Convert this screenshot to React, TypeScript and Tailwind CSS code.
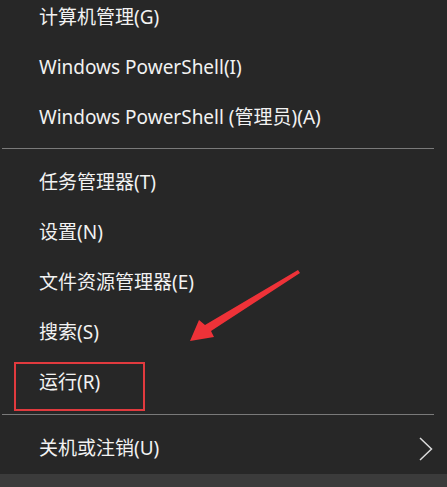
type Item = { label: string; boxed?: boolean; submenu?: boolean };

const groups: Item[][] = [
  [
    { label: "计算机管理(G)" },
    { label: "Windows PowerShell(I)" },
    { label: "Windows PowerShell (管理员)(A)" },
  ],
  [
    { label: "任务管理器(T)" },
    { label: "设置(N)" },
    { label: "文件资源管理器(E)" },
    { label: "搜索(S)" },
    { label: "运行(R)", boxed: true },
  ],
  [{ label: "关机或注销(U)", submenu: true }],
];

function MenuRow({ item }: { item: Item }) {
  return (
    <div className="relative flex h-[50px] items-center pl-[39px] pr-[14px]">
      {item.boxed && (
        <div className="absolute left-[14px] top-[5px] h-[49px] w-[131px] border-2 border-[#e13a3e]" />
      )}
      <span className="flex-1 text-[19px] leading-none text-[#f2f2f2]">{item.label}</span>
      {item.submenu && (
        <svg width="14" height="24" viewBox="0 0 14 24" className="mt-[1px]">
          <polyline points="1,1 12.5,12 1,23" fill="none" stroke="#dcdcdc" strokeWidth="1.5" />
        </svg>
      )}
    </div>
  );
}

export default function App() {
  return (
    <div
      className="relative h-[487px] w-[447px] overflow-hidden bg-[#272727]"
      style={{ fontFamily: '"Noto Sans", "Noto Sans CJK SC", sans-serif' }}
    >
      <div className="-mt-2">
        {groups.map((group, gi) => (
          <div key={gi}>
            {gi > 0 && <div className="ml-[2px] w-[432px] border-t border-[#7a7a7a]" />}
            <div className={gi === 0 ? "mb-[6px]" : gi === 1 ? "mb-[7px] mt-[8px]" : "mt-[8px]"}>
              {group.map((item) => (
                <MenuRow key={item.label} item={item} />
              ))}
            </div>
          </div>
        ))}
      </div>
      <div className="absolute bottom-0 left-0 h-[13px] w-full bg-[#3b3b3b]" />

      {/* red annotation arrow */}
      <svg className="pointer-events-none absolute left-0 top-0" width="447" height="487">
        <polygon
          points="298,270 300,273 211,331 214,337 190,341 199,320 205,325"
          fill="#ee3238"
        />
      </svg>
    </div>
  );
}
